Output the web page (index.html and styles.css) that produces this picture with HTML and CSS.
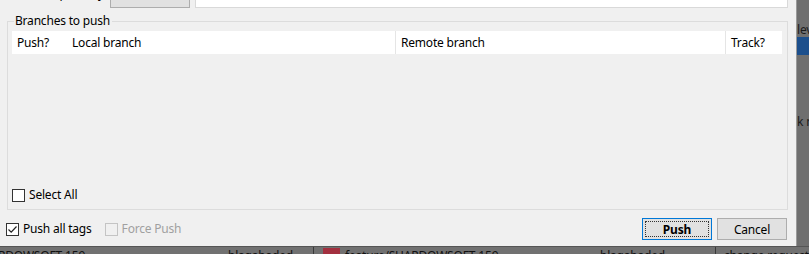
FILE: index.html
```html
<!DOCTYPE html>
<html lang="en">
<head>
  <meta charset="UTF-8">
  <title>Push</title>
  <link rel="stylesheet" href="styles.css">
</head>
<body>
<div class="screen">
  <div class="main-row">
    <div class="dialog">
      <div class="top-row">
        <span class="top-label">Remote repository</span>
        <span class="top-button">Manage</span>
        <span class="top-field">http://git.example.com/repo/project.git</span>
      </div>

      <fieldset class="groupbox">
        <legend>Branches to push</legend>
        <div class="group-inner">
          <div class="grid-header">
            <div class="col col-push">Push?</div>
            <div class="col col-local">Local branch</div>
            <div class="col col-remote">Remote branch</div>
            <div class="col col-track">Track?</div>
          </div>
          <div class="grid-body"></div>
          <label class="check select-all"><span class="box"></span>Select All</label>
        </div>
      </fieldset>

      <div class="bottom-row">
        <label class="check"><span class="box checked">
          <svg width="11" height="11" viewBox="0 0 11 11"><path d="M1.5 5.5 L4.2 8.2 L9.5 2.5" fill="none" stroke="#222" stroke-width="1.2"/></svg>
        </span>Push all tags</label>
        <label class="check disabled"><span class="box"></span>Force Push</label>
        <div class="spacer"></div>
        <button class="btn btn-default"><span>Push</span></button>
        <button class="btn">Cancel</button>
      </div>
    </div>

    <div class="side-strip">
      <div class="side-text">lev</div>
      <div class="side-bar"></div>
      <div class="side-text side-low">k n</div>
    </div>
  </div>

  <div class="status-strip">
    <span class="st st-1">RDOWSOFT-159</span>
    <span class="st st-2">blagabaded</span>
    <span class="st-div st-div-1"></span>
    <span class="st-icon"></span>
    <span class="st st-3">feature/SHARDOWSOFT-159</span>
    <span class="st st-4">blagabaded</span>
    <span class="st-div st-div-2"></span>
    <span class="st st-5">change requests</span>
  </div>
</div>
</body>
</html>
```

FILE: styles.css
```css
html, body {
  margin: 0;
  padding: 0;
  width: 809px;
  height: 254px;
  overflow: hidden;
  background-color: #6e6e6e;
  font-family: "Noto Sans", "Open Sans", sans-serif;
  font-size: 12px;
  letter-spacing: -0.2px;
  color: #000;
}

.screen {
  display: flex;
  flex-direction: column;
  height: 254px;
}

.main-row {
  display: flex;
  height: 246px;
}

/* The dialog itself */
.dialog {
  width: 796px;
  background-color: #f0f0f0;
  display: flex;
  flex-direction: column;
  box-sizing: border-box;
}

/* Only the bottom edge of the top row is visible */
.top-row {
  height: 8px;
  display: flex;
  align-items: flex-end;
  overflow: hidden;
  flex-shrink: 0;
}

.top-label {
  width: 110px;
  padding-right: 6px;
  box-sizing: border-box;
  text-align: right;
  line-height: 16px;
  margin-bottom: 6px;
  color: #000;
}

.top-button {
  width: 80px;
  height: 24px;
  box-sizing: border-box;
  background-color: #e1e1e1;
  border: 1px solid #adadad;
  text-align: center;
  line-height: 12px;
  color: #000;
}

.top-field {
  width: 593px;
  height: 24px;
  margin-left: 5px;
  box-sizing: border-box;
  background-color: #fff;
  border: 1px solid #d9d9d9;
  line-height: 12px;
  padding-left: 8px;
  color: #000;
}

/* Group box */
.groupbox {
  flex: 1;
  margin: 5px 8px 0 7px;
  padding: 2px 5px 0 4px;
  border: 1px solid #dcdcdc;
  min-height: 0;
  display: block;
  box-sizing: border-box;
}

.groupbox legend {
  padding: 0 2px 0 1px;
  margin-left: 2px;
  line-height: 16px;
  color: #000;
}

.group-inner {
  display: flex;
  flex-direction: column;
  height: 100%;
}

.grid-header {
  display: flex;
  height: 23px;
  background-color: #fff;
  align-items: center;
  flex-shrink: 0;
}

.col {
  box-sizing: border-box;
  height: 23px;
  line-height: 23px;
  padding-left: 5px;
  white-space: nowrap;
}

.col-push { width: 55px; }
.col-local { width: 329px; border-right: 1px solid #e5e5e5; }
.col-remote { width: 330px; border-right: 1px solid #e5e5e5; }
.col-track { flex: 1; }

.grid-body {
  flex: 1;
}

/* Checkboxes */
.check {
  display: flex;
  align-items: center;
  gap: 4px;
  line-height: 16px;
}

.box {
  width: 13px;
  height: 13px;
  box-sizing: border-box;
  border: 1px solid #333;
  background-color: #fff;
  display: flex;
  align-items: center;
  justify-content: center;
}

.box svg {
  display: block;
}

.select-all {
  margin-bottom: 6px;
}

.check.disabled {
  color: #a0a0a0;
}

.check.disabled .box {
  border-color: #c4c4c4;
  background-color: #f0f0f0;
}

/* Bottom row with buttons */
.bottom-row {
  display: flex;
  align-items: center;
  gap: 13px;
  margin: 8px 9px 6px 6px;
  height: 22px;
  flex-shrink: 0;
}

.spacer {
  flex: 1;
}

.btn {
  width: 70px;
  height: 22px;
  box-sizing: border-box;
  font-family: inherit;
  font-size: 12px;
  letter-spacing: -0.2px;
  background-color: #e1e1e1;
  border: 1px solid #adadad;
  padding: 0;
  margin-left: -8px;
  color: #000;
}

.btn-default {
  border-color: #0078d7;
  padding: 2px;
  font-weight: bold;
}

.btn-default span {
  display: block;
  height: 100%;
  line-height: 16px;
  border: 1px dotted #333;
  box-sizing: border-box;
}

/* Background windows peeking out */
.side-strip {
  flex: 1;
  background-color: #6f6f6f;
  border-left: 1px solid #9a9a9a;
  overflow: hidden;
  white-space: nowrap;
  color: #1a1a1a;
}

.side-text {
  margin-top: 23px;
  line-height: 14px;
}

.side-bar {
  height: 18px;
  background-color: #1c4f8c;
}

.side-low {
  margin-top: 60px;
}

.status-strip {
  height: 8px;
  position: relative;
  overflow: hidden;
  background-color: #717171;
  border-top: 1px solid #555;
  box-sizing: border-box;
}

.st {
  position: absolute;
  top: 1px;
  line-height: 16px;
  color: #111;
  white-space: nowrap;
}

.st-1 { left: -2px; }
.st-2 { left: 228px; }
.st-3 { left: 345px; }
.st-4 { left: 600px; }
.st-5 { left: 724px; }

.st-div {
  position: absolute;
  top: 0;
  width: 1px;
  height: 8px;
  background-color: #3a3a3a;
}

.st-div-1 { left: 313px; }
.st-div-2 { left: 715px; }

.st-icon {
  position: absolute;
  top: 1px;
  left: 323px;
  width: 17px;
  height: 8px;
  background-color: #a3303f;
}
```
